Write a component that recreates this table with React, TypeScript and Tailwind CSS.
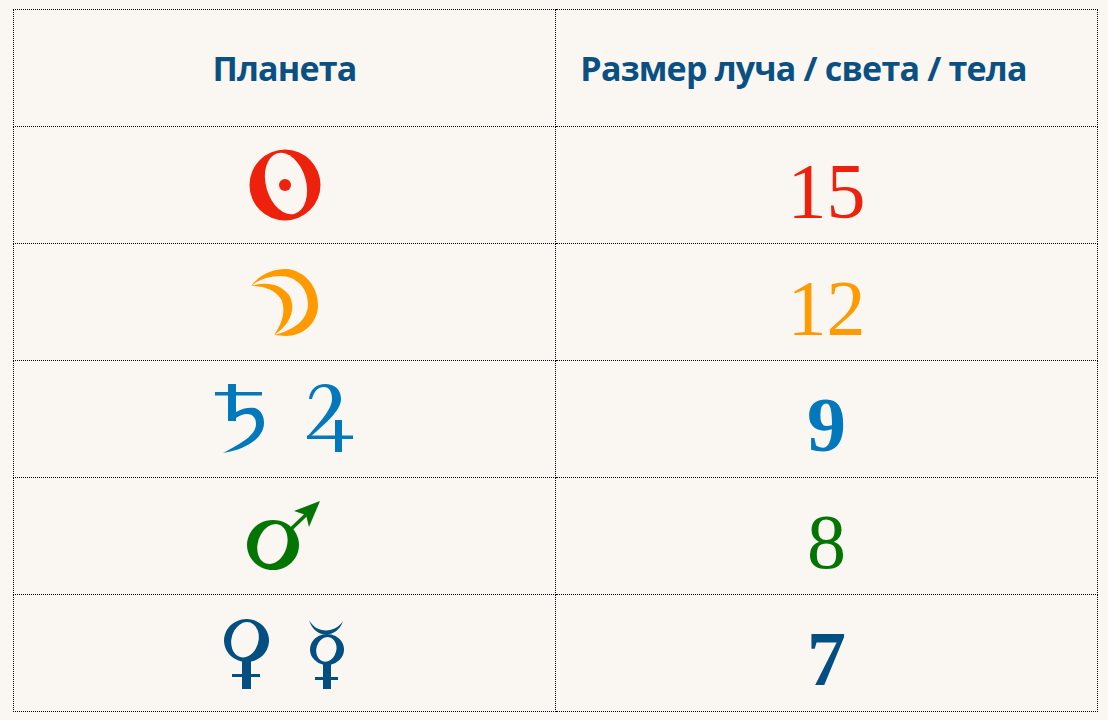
import React from 'react';

const CREAM = '#faf7f2';

function Sun() {
  return (
    <svg width="72" height="72" viewBox="0 0 72 72">
      <circle cx="36" cy="36" r="35.5" fill="#ee220c" />
      <ellipse cx="37" cy="34.5" rx="20" ry="31.5" fill={CREAM} transform="rotate(-16 37 34.5)" />
      <circle cx="36" cy="36" r="6" fill="#ee220c" />
    </svg>
  );
}

function Moon() {
  return (
    <svg width="78" height="80" viewBox="0 0 78 80">
      <path
        fill="#ff9a00"
        d="M5,24 C15,11 28,7 40,7 C58,8 72,24 72,43 C72,62 56,74 40,74 L28,73 C48,68 62,58 62,42 C62,25 49,14 35,14 C23,14 12,18 5,24 Z"
      />
      <path
        fill="#ff9a00"
        d="M5,24 C20,19 35,22 43,33 C50,45 46,62 28,73 C37,61 40,47 35,37 C29,28 18,24 5,24 Z"
      />
    </svg>
  );
}

function SaturnJupiter() {
  return (
    <svg width="150" height="80" viewBox="0 0 150 80" fill="#0478bc">
      <rect x="5" y="13" width="47" height="3.5" />
      <rect x="18" y="5" width="8" height="37" />
      <path d="M26,33 C32,29 40,28 45,29 C51,31 54,37 54,44 C54,58 38,70 13,74 C32,64 46,56 46,45 C46,38 42,35 37,35 C33,35 29,37 26,39 Z" />
      <path d="M99,20 C100,10 107,5 115,5 C124,5 131,10 131,20 C131,30 120,41 100,58 L97,58 C113,40 122,29 122,20 C122,12 119,8 114,8 C108,8 104,12 102,20 Z" />
      <rect x="97" y="56.5" width="46" height="3.5" />
      <rect x="125" y="41" width="7" height="32" />
    </svg>
  );
}

function Mars() {
  return (
    <svg width="85" height="80" viewBox="40 18 85 80" fill="#037503">
      <path
        fillRule="evenodd"
        d="M71,42 A26,25 0 1 0 71.01,42 Z M73.5,46 A14.5,20.5 18 1 1 73.49,46 Z"
      />
      <line x1="87" y1="53" x2="108" y2="33" stroke="#037503" strokeWidth="3.5" />
      <path d="M118,23 L92,33 L104,37 L107,49 Z" />
    </svg>
  );
}

function VenusMercury() {
  return (
    <svg width="130" height="77" viewBox="20 15 130 77" fill="#034f82">
      <path
        fillRule="evenodd"
        d="M46.5,19 A22.5,21.5 0 1 0 46.51,19 Z M47,22 A13.5,18 15 1 1 46.99,22 Z"
      />
      <rect x="42" y="60" width="9" height="29" />
      <rect x="32" y="74" width="28" height="3" />
      <path d="M109,20 C112,30 119,34.5 126,34.5 C133,34.5 140,30 143,21 C139,27 133,30.5 126,30.5 C119,30.5 113,27 109,20 Z" />
      <path
        fillRule="evenodd"
        d="M127,34 A17,15.5 0 1 0 127.01,34 Z M127.5,37 A10,12.5 15 1 1 127.49,37 Z"
      />
      <rect x="123" y="63" width="8" height="26" />
      <rect x="115" y="77" width="23" height="3" />
    </svg>
  );
}

const rows = [
  { icon: <Sun />, value: '15', color: 'text-[#ee220c]', weight: 'font-normal' },
  { icon: <Moon />, value: '12', color: 'text-[#ff9a00]', weight: 'font-normal' },
  { icon: <SaturnJupiter />, value: '9', color: 'text-[#0478bc]', weight: 'font-bold' },
  { icon: <Mars />, value: '8', color: 'text-[#037503]', weight: 'font-normal' },
  { icon: <VenusMercury />, value: '7', color: 'text-[#034f82]', weight: 'font-bold' },
];

export default function App() {
  return (
    <div className="min-h-screen w-full bg-[#faf7f2] pt-[9px] pl-[13px]">
      <table className="w-[1085px] border-collapse border border-dotted border-black">
        <thead>
          <tr className="h-[117px]">
            <th className="w-1/2 border border-dotted border-black text-center align-middle text-[34px] font-bold tracking-[-0.8px] text-[#0b5082] [font-family:'Open_Sans','Noto_Sans',sans-serif]">
              Планета
            </th>
            <th className="w-1/2 border border-dotted border-black pr-[46px] text-center align-middle text-[34px] font-bold tracking-[-0.8px] text-[#0b5082] [font-family:'Open_Sans','Noto_Sans',sans-serif]">
              Размер луча / света / тела
            </th>
          </tr>
        </thead>
        <tbody>
          {rows.map((r) => (
            <tr key={r.value} className="h-[117px]">
              <td className="border border-dotted border-black align-middle">
                <div className="flex items-center justify-center">{r.icon}</div>
              </td>
              <td
                className={`border border-dotted border-black pt-[12px] text-center align-middle text-[78px] leading-none ${r.color} ${r.weight} [font-family:'Liberation_Serif',serif]`}
              >
                {r.value}
              </td>
            </tr>
          ))}
        </tbody>
      </table>
    </div>
  );
}
